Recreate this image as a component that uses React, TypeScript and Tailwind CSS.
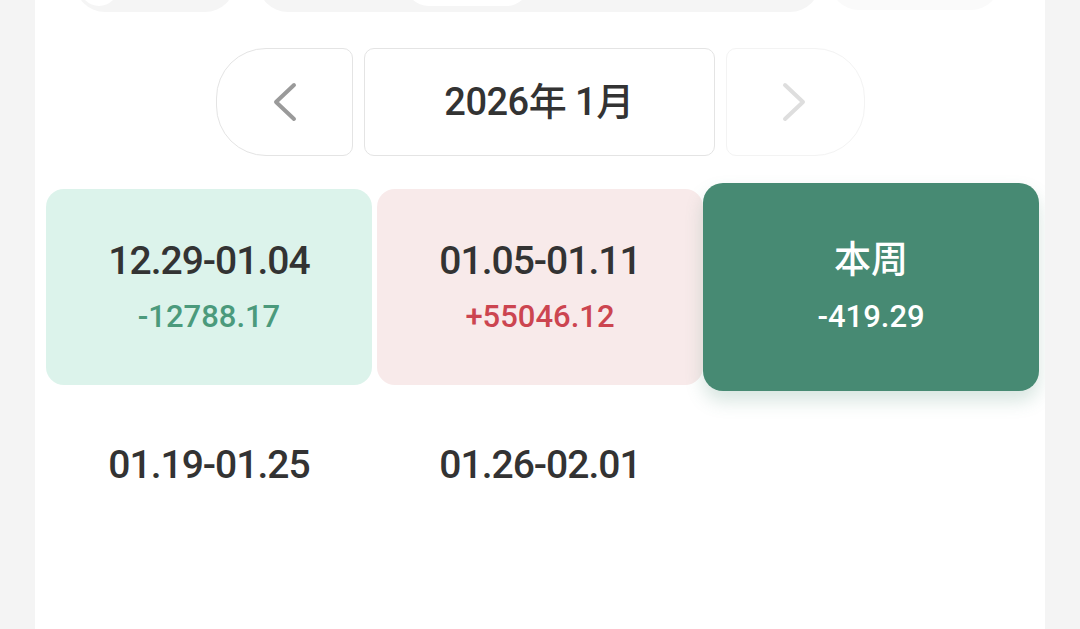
import React from "react";

interface Week {
  range: string;
  amount?: string;
  tone?: "down" | "up" | "current";
  label?: string;
}

const weeks: Week[] = [
  { range: "12.29-01.04", amount: "-12788.17", tone: "down" },
  { range: "01.05-01.11", amount: "+55046.12", tone: "up" },
  { range: "01.12-01.18", label: "本周", amount: "-419.29", tone: "current" },
  { range: "01.19-01.25" },
  { range: "01.26-02.01" },
];

const font = { fontFamily: 'Roboto, "Noto Sans CJK SC", sans-serif' };

export default function App() {
  return (
    <div className="min-h-[629px] bg-[#f4f4f4]" style={font}>
      <div className="mx-[35px] h-[629px] overflow-hidden bg-white">
        {/* 上一行的残留 */}
        <div className="-mt-[48px] flex h-[60px] items-stretch">
          <div className="ml-[40px] flex w-[160px] items-center rounded-full bg-[#f5f5f5] px-[5px]">
            <div className="h-[48px] w-[38px] rounded-full bg-white" />
          </div>
          <div className="ml-[23px] flex w-[562px] items-center rounded-full bg-[#f5f5f5] pl-[147px]">
            <div className="h-[48px] w-[125px] rounded-full bg-white" />
          </div>
          <div className="ml-[10px] mb-[2px] w-[170px] rounded-full bg-[#fafafa]" />
        </div>

        {/* 月份切换 */}
        <div className="mt-[36px] flex h-[108px] justify-center gap-[11px]">
          <button className="flex w-[137px] items-center justify-center rounded-l-[50px] rounded-r-[10px] border border-[#e4e4e4] bg-white pl-[2px]">
            <svg width="28" height="40" viewBox="0 0 28 40" fill="none">
              <path d="M23 3 L5 20 L23 37" stroke="#9a9a9a" strokeWidth="4" strokeLinecap="round" strokeLinejoin="round" />
            </svg>
          </button>
          <div className="flex w-[351px] items-center justify-center rounded-[10px] border border-[#e4e4e4] text-[38px] font-medium tracking-[-0.5px] text-[#333]">
            2026年 1月
          </div>
          <button className="flex w-[139px] items-center justify-center rounded-l-[10px] rounded-r-[50px] border border-[#f3f3f3] bg-white pr-[2px]">
            <svg width="28" height="40" viewBox="0 0 28 40" fill="none">
              <path d="M5 3 L23 20 L5 37" stroke="#dedede" strokeWidth="4" strokeLinecap="round" strokeLinejoin="round" />
            </svg>
          </button>
        </div>

        {/* 周列表 */}
        <div className="mt-[33px] grid grid-cols-3 gap-x-[5px] gap-y-[5px] px-[11px]">
          {weeks.map((w, i) => (
            <WeekCell key={i} week={w} tall={i < 3} />
          ))}
        </div>
      </div>
    </div>
  );
}

function WeekCell({ week, tall }: { week: Week; tall: boolean }) {
  const base = "flex flex-col items-center justify-center";
  if (week.tone === "current") {
    return (
      <div className={`${base} -mx-[5px] -my-[6px] h-[208px] rounded-[20px] bg-[#478a73] text-white shadow-[0_10px_18px_rgba(71,138,115,0.22)]`}>
        <div className="text-[37px] font-medium leading-none">{week.label}</div>
        <div className="mt-[22px] text-[31px] font-medium leading-none">{week.amount}</div>
      </div>
    );
  }
  const bg = week.tone === "down" ? "bg-[#dcf3eb]" : week.tone === "up" ? "bg-[#f8eaea]" : "";
  const amt = week.tone === "down" ? "text-[#4b9a7c]" : "text-[#cc4550]";
  return (
    <div className={`${base} ${tall ? "h-[196px]" : "h-[150px]"} rounded-[18px] ${bg}`}>
      <div className="text-[39px] font-medium leading-none tracking-[-1px] text-[#333]">{week.range}</div>
      {week.amount && <div className={`mt-[20px] text-[31px] font-medium leading-none ${amt}`}>{week.amount}</div>}
    </div>
  );
}
